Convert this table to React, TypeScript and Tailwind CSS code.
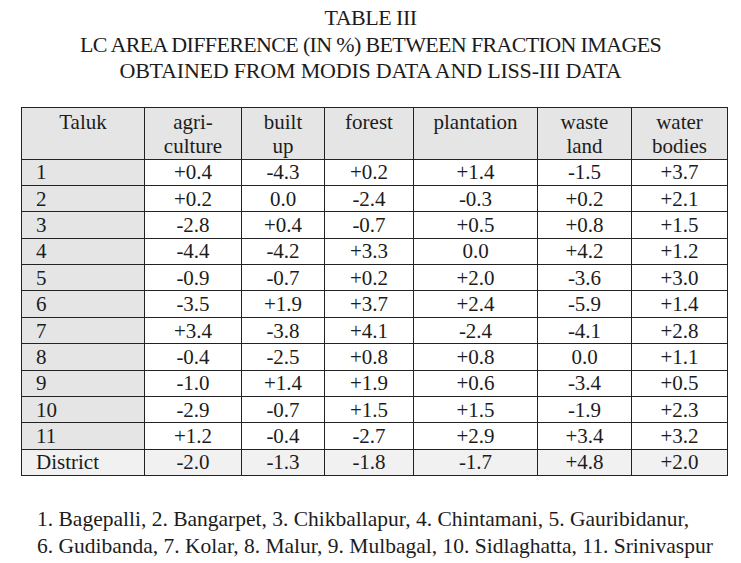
const cols = ['agri-|culture', 'built|up', 'forest', 'plantation', 'waste|land', 'water|bodies']

const rows: [string, string[]][] = [
  ['1', ['+0.4', '-4.3', '+0.2', '+1.4', '-1.5', '+3.7']],
  ['2', ['+0.2', '0.0', '-2.4', '-0.3', '+0.2', '+2.1']],
  ['3', ['-2.8', '+0.4', '-0.7', '+0.5', '+0.8', '+1.5']],
  ['4', ['-4.4', '-4.2', '+3.3', '0.0', '+4.2', '+1.2']],
  ['5', ['-0.9', '-0.7', '+0.2', '+2.0', '-3.6', '+3.0']],
  ['6', ['-3.5', '+1.9', '+3.7', '+2.4', '-5.9', '+1.4']],
  ['7', ['+3.4', '-3.8', '+4.1', '-2.4', '-4.1', '+2.8']],
  ['8', ['-0.4', '-2.5', '+0.8', '+0.8', '0.0', '+1.1']],
  ['9', ['-1.0', '+1.4', '+1.9', '+0.6', '-3.4', '+0.5']],
  ['10', ['-2.9', '-0.7', '+1.5', '+1.5', '-1.9', '+2.3']],
  ['11', ['+1.2', '-0.4', '-2.7', '+2.9', '+3.4', '+3.2']],
]

const district = ['-2.0', '-1.3', '-1.8', '-1.7', '+4.8', '+2.0']
const widths = ['w-[123px]', 'w-[97px]', 'w-[83px]', 'w-[89px]', 'w-[124px]', 'w-[94px]', 'w-[96px]']

export default function App() {
  return (
    <div className="w-[741px] h-[563px] bg-white text-[#1c1c1c] font-['Liberation_Serif',serif] overflow-hidden">
      {/* Caption */}
      <div className="pt-[5px] text-center text-[22px] leading-[26.5px]">
        <p className="tracking-[-0.5px]">TABLE III</p>
        <p className="tracking-[-0.65px]">LC AREA DIFFERENCE (IN %) BETWEEN FRACTION IMAGES</p>
        <p className="tracking-[-0.2px]">OBTAINED FROM MODIS DATA AND LISS-III DATA</p>
      </div>

      <table className="mt-[22px] ml-[21px] table-fixed border-collapse text-[21px]">
        <colgroup>
          {widths.map(w => <col key={w} className={w} />)}
        </colgroup>
        <thead>
          <tr className="h-[52px] bg-[#e5e5e5]">
            <th className="border border-[#222] font-normal align-top pt-[2px] leading-[24px]">Taluk</th>
            {cols.map(c => (
              <th key={c} className="border border-[#222] font-normal align-top pt-[2px] leading-[24px]">
                {c.split('|').map(l => <div key={l}>{l}</div>)}
              </th>
            ))}
          </tr>
        </thead>
        <tbody>
          {rows.map(([t, vals]) => (
            <tr key={t} className="h-[26.4px] leading-[24px]">
              <td className="border border-[#222] bg-[#e5e5e5] pl-[14px] py-0">{t}</td>
              {vals.map((v, i) => (
                <td key={i} className="border border-[#222] text-center py-0">{v}</td>
              ))}
            </tr>
          ))}
          <tr className="h-[26.4px] leading-[24px] bg-[#f1f1f1]">
            <td className="border border-[#222] pl-[14px] py-0">District</td>
            {district.map((v, i) => (
              <td key={i} className="border border-[#222] text-center py-0">{v}</td>
            ))}
          </tr>
        </tbody>
      </table>

      {/* Legend */}
      <div className="mt-[30px] pl-[37px] text-[21.5px] leading-[27px]">
        <p>1. Bagepalli, 2. Bangarpet, 3. Chikballapur, 4. Chintamani, 5. Gauribidanur,</p>
        <p>6. Gudibanda, 7. Kolar, 8. Malur, 9. Mulbagal, 10. Sidlaghatta, 11. Srinivaspur</p>
      </div>
    </div>
  )
}
